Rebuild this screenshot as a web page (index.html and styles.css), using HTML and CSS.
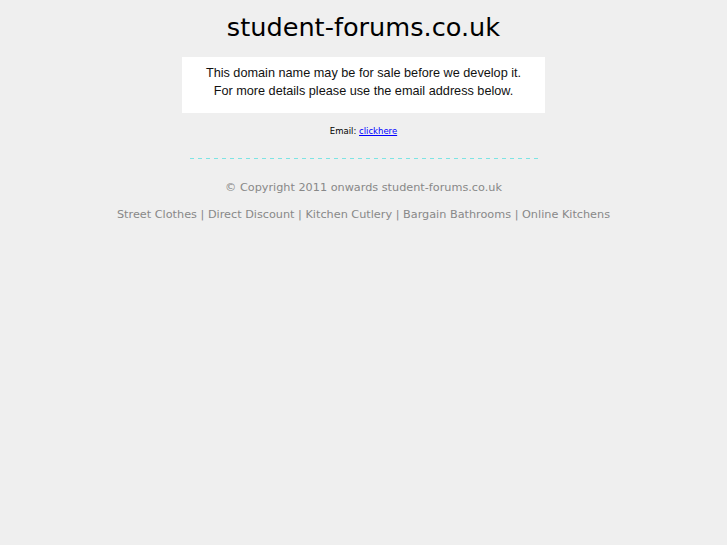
FILE: index.html
```html
<!DOCTYPE html>
<html>
<head>
  <title>student-forums.co.uk</title>
  <link rel="stylesheet" href="styles.css">
</head>
<body>
  <div class="page">
    <h1 class="title">student-forums.co.uk</h1>
    <div class="notice">
      <p>This domain name may be for sale before we develop it.</p>
      <p>For more details please use the email address below.</p>
    </div>
    <p class="email">Email: <a href="#">clickhere</a></p>
    <hr class="divider">
    <p class="copy">&copy; Copyright 2011 onwards student-forums.co.uk</p>
    <p class="links">
      <a href="#">Street Clothes</a> | <a href="#">Direct Discount</a> | <a href="#">Kitchen Cutlery</a> | <a href="#">Bargain Bathrooms</a> | <a href="#">Online Kitchens</a>
    </p>
  </div>
</body>
</html>
```

FILE: styles.css
```css
body {
  margin: 0;
  padding: 0;
  background-color: #efefef;
  font-family: "DejaVu Sans", sans-serif;
}
.page {
  display: flex;
  flex-direction: column;
  align-items: center;
  padding-top: 11px;
}
.title {
  margin: 0;
  font-size: 25.6px;
  font-weight: normal;
  color: #000;
  line-height: 32px;
}
.notice {
  width: 363px;
  height: 56px;
  margin-top: 14px;
  background-color: #fff;
  font-family: "Liberation Sans", Arial, sans-serif;
  font-size: 12.7px;
  color: #111;
  text-align: center;
  box-sizing: border-box;
  padding-top: 7px;
}
.notice p {
  margin: 0;
  line-height: 18px;
}
.email {
  margin: 11px 0 0;
  font-size: 8.5px;
  line-height: 14px;
  color: #000;
}
.email a {
  color: #00f;
}
.divider {
  width: 348px;
  height: 1px;
  margin: 20px 0 0;
  border: none;
  background: repeating-linear-gradient(to right, #7ee4e4 0 4px, transparent 4px 8px);
}
.copy {
  margin: 21px 0 0;
  font-size: 11.25px;
  line-height: 16px;
  color: #888;
}
.links {
  margin: 11px 0 0;
  font-size: 11.25px;
  line-height: 16px;
  color: #888;
}
.links a {
  color: #888;
  text-decoration: none;
}
```
